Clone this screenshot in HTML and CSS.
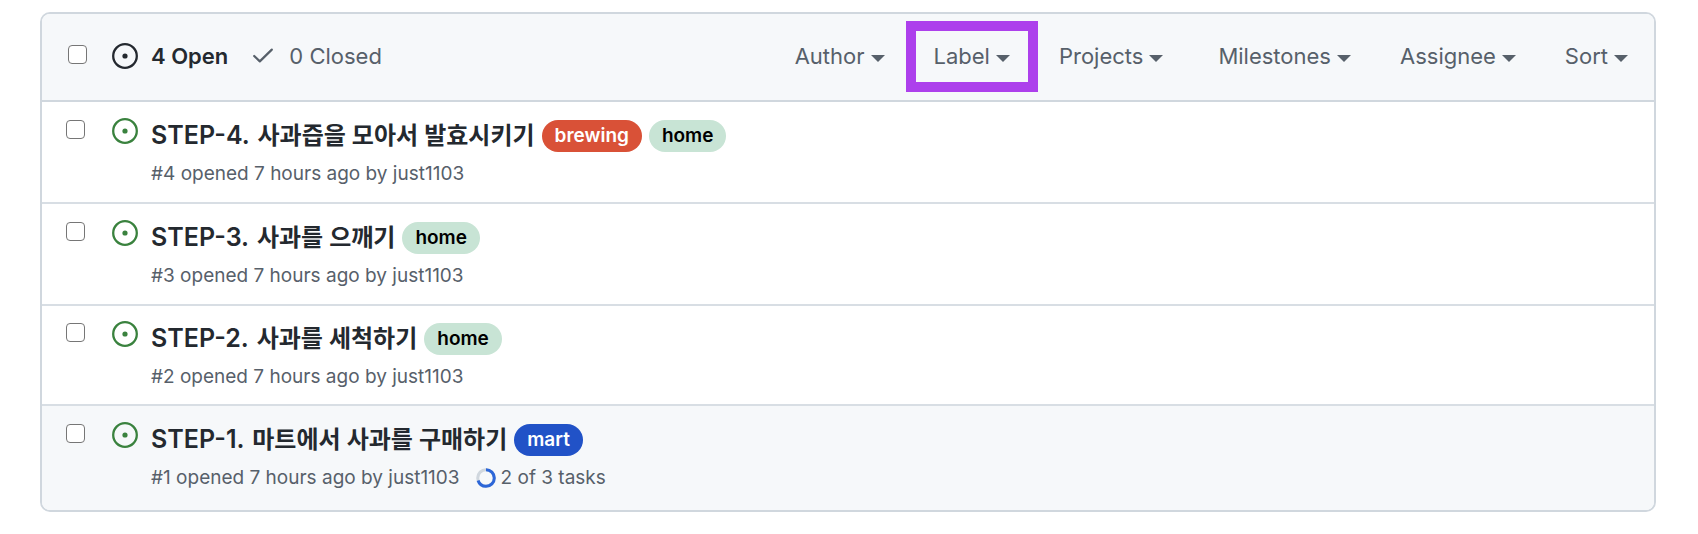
FILE: index.html
```html
<!DOCTYPE html>
<html lang="ko">
<head>
<meta charset="utf-8">
<title>Issues</title>
<link rel="stylesheet" href="styles.css">
</head>
<body>
<svg class="sprite" aria-hidden="true">
  <symbol id="issue-open" viewBox="0 0 26 26">
    <circle cx="13" cy="13" r="11.8" fill="none" stroke="currentColor" stroke-width="2.3"/>
    <circle cx="13" cy="13" r="2.6" fill="currentColor"/>
  </symbol>
</svg>
<main class="issues">
  <header class="toolbar">
    <input class="check" type="checkbox" aria-label="Select all issues">
    <nav class="states">
      <a class="state state-current" href="#open"><svg class="icon"><use href="#issue-open"/></svg>4 Open</a>
      <a class="state" href="#closed"><svg class="tick" viewBox="0 0 20 16"><path d="M1.2 8 6.8 13.400 18.800 1.600" fill="none" stroke="currentColor" stroke-width="2.200" stroke-linecap="round" stroke-linejoin="round"/></svg>0 Closed</a>
    </nav>
    <div class="filters">
      <button class="filter" type="button">Author<span class="caret"></span></button>
      <button class="filter filter-marked" type="button">Label<span class="caret"></span></button>
      <button class="filter filter-wide" type="button">Projects<span class="caret"></span></button>
      <button class="filter" type="button">Milestones<span class="caret"></span></button>
      <button class="filter" type="button">Assignee<span class="caret"></span></button>
      <button class="filter" type="button">Sort<span class="caret"></span></button>
    </div>
  </header>
  <ul class="list">
    <li class="row">
      <input class="check" type="checkbox" aria-labelledby="issue-4">
      <svg class="icon icon-open"><use href="#issue-open"/></svg>
      <div class="body">
        <div class="head"><a class="title" id="issue-4" href="#4"><span class="step">STEP-4. </span>사과즙을 모아서 발효시키기</a><a class="label label-brewing" href="#brewing">brewing</a><a class="label label-home" href="#home">home</a></div>
        <div class="meta">#4 opened 7 hours ago by just1103</div>
      </div>
    </li>
    <li class="row">
      <input class="check" type="checkbox" aria-labelledby="issue-3">
      <svg class="icon icon-open"><use href="#issue-open"/></svg>
      <div class="body">
        <div class="head"><a class="title" id="issue-3" href="#3"><span class="step">STEP-3. </span>사과를 으깨기</a><a class="label label-home" href="#home">home</a></div>
        <div class="meta">#3 opened 7 hours ago by just1103</div>
      </div>
    </li>
    <li class="row row-tight">
      <input class="check" type="checkbox" aria-labelledby="issue-2">
      <svg class="icon icon-open"><use href="#issue-open"/></svg>
      <div class="body">
        <div class="head"><a class="title" id="issue-2" href="#2"><span class="step">STEP-2. </span>사과를 세척하기</a><a class="label label-home" href="#home">home</a></div>
        <div class="meta">#2 opened 7 hours ago by just1103</div>
      </div>
    </li>
    <li class="row row-hover">
      <input class="check" type="checkbox" aria-labelledby="issue-1">
      <svg class="icon icon-open"><use href="#issue-open"/></svg>
      <div class="body">
        <div class="head"><a class="title" id="issue-1" href="#1"><span class="step">STEP-1. </span>마트에서 사과를 구매하기</a><a class="label label-mart" href="#mart">mart</a></div>
        <div class="meta">#1 opened 7 hours ago by just1103<span class="tasks"><svg class="ring" viewBox="0 0 20 20"><circle cx="10" cy="10" r="8.300" fill="none" stroke="#d0d7de" stroke-width="3"/><circle cx="10" cy="10" r="8.300" fill="none" stroke="#2c66d8" stroke-width="3" pathLength="3" stroke-dasharray="2.100 0.900" transform="rotate(-90 10 10)"/></svg>2 of 3 tasks</span></div>
      </div>
    </li>
  </ul>
</main>
</body>
</html>
```
FILE: styles.css
```css
* { box-sizing: border-box; }

body {
  margin: 0;
  padding: 12px 42px 22px 40px;
  background: #fff;
  color: #24292f;
  font-family: Inter, "Noto Sans CJK KR", sans-serif;
  font-size: 22px;
}

a { color: inherit; text-decoration: none; }

.sprite { position: absolute; width: 0; height: 0; }

.issues {
  border: 2px solid #d0d7de;
  border-radius: 10px;
  overflow: hidden;
}

.toolbar {
  display: flex;
  align-items: center;
  padding: 17px 8px 18px 26px;
  background: #f6f8fa;
  color: #57606a;
}

.check {
  appearance: none;
  flex: none;
  width: 19px;
  height: 19px;
  margin: 0;
  border: 1px solid #767676;
  border-radius: 4px;
  background: #fff;
}

.toolbar .check { margin-bottom: 4px; }

.icon { flex: none; width: 26px; height: 26px; }
.icon-open { color: #3a823e; }

.states { display: flex; gap: 25px; margin-left: 25px; padding-bottom: 2px; }
.state { display: flex; align-items: center; gap: 13px; white-space: nowrap; }
.state-current { color: #24292f; font-weight: 600; }
.tick { width: 20px; height: 16px; margin-right: 3px; }

.filters { display: flex; gap: 13px; margin-left: auto; }

.filter {
  display: flex;
  align-items: center;
  gap: 6px;
  height: 51px;
  padding: 0 18px 2px;
  border: 0;
  background: none;
  color: inherit;
  font: inherit;
}

.filter-marked { outline: 10px solid #ad40ec; }
.filter-wide { margin-right: 6px; }

.caret {
  margin-top: 6px;
  border: 7px solid transparent;
  border-top-color: currentColor;
  border-bottom: 0;
}

.list { margin: 0; padding: 0; list-style: none; }

.row {
  display: flex;
  align-items: flex-start;
  padding: 16px 24px 14px 24px;
  border-top: 2px solid #d8dee4;
}

.row:first-child { border-top-color: #d0d7de; }
.row .check { margin-top: 2px; }
.row .icon { margin-left: 27px; }
.row-tight { padding-top: 15px; padding-bottom: 13px; }
.row-hover { padding-bottom: 18px; background: #f6f8fa; }

.body { margin-left: 13px; }
.head { display: flex; align-items: center; height: 36px; gap: 7px; }
.title { padding-bottom: 2px; font-size: 24px; font-weight: 600; line-height: 34px; }
.step { margin-right: 2px; font-size: 25px; }

.label {
  padding: 0 13px;
  border-radius: 16px;
  font-size: 19px;
  font-weight: 600;
  line-height: 32px;
}

.label-brewing { background: #d95137; color: #fff; }
.label-home { background: #c8e4d5; color: #000; }
.label-mart { background: #2152c7; color: #fff; }

.meta {
  display: flex;
  align-items: center;
  margin-top: 6px;
  color: #57606a;
  font-size: 19px;
  line-height: 28px;
}

.tasks { display: flex; align-items: center; gap: 5px; margin-left: 16px; }
.ring { width: 20px; height: 20px; }
```
